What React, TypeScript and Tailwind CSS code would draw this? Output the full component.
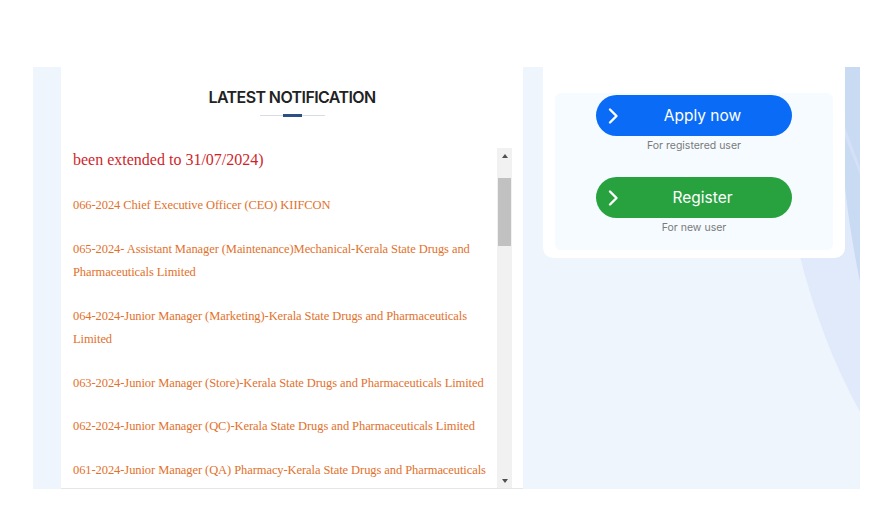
const notices = [
  '066-2024 Chief Executive Officer (CEO) KIIFCON',
  '065-2024- Assistant Manager (Maintenance)Mechanical-Kerala State Drugs and Pharmaceuticals Limited',
  '064-2024-Junior Manager (Marketing)-Kerala State Drugs and Pharmaceuticals Limited',
  '063-2024-Junior Manager (Store)-Kerala State Drugs and Pharmaceuticals Limited',
  '062-2024-Junior Manager (QC)-Kerala State Drugs and Pharmaceuticals Limited',
  '061-2024-Junior Manager (QA) Pharmacy-Kerala State Drugs and Pharmaceuticals Limited',
]

function Chevron() {
  return (
    <svg width="12" height="18" viewBox="0 0 12 18" fill="none">
      <path d="M3 2.5L9.5 9L3 15.5" stroke="white" strokeWidth="2.4" strokeLinecap="round" strokeLinejoin="round" />
    </svg>
  )
}

function ActionButton({ label, note, color }: { label: string; note: string; color: string }) {
  return (
    <div className="flex flex-col items-center">
      <button
        className={`w-[196px] h-[41px] rounded-full flex items-center pl-[11px] pr-[14px] text-white ${color}`}
      >
        <Chevron />
        <span className="flex-1 text-center text-[15.5px] pl-[8px]">{label}</span>
      </button>
      <p className="mt-[3px] text-[10.5px] text-[#7a7a7a] leading-[14px]">{note}</p>
    </div>
  )
}

export default function App() {
  return (
    <div className="w-[880px] h-[528px] bg-white pt-[67px]" style={{ fontFamily: 'Inter, "Open Sans", sans-serif' }}>
      <div className="relative ml-[33px] w-[827px] h-[422px] bg-[#eff5fd] flex overflow-hidden">
        {/* background swoosh */}
        <svg className="absolute inset-0" width="827" height="422" viewBox="0 0 827 422">
          <path d="M735 0 C 752 150, 775 250, 827 345 L 827 0 Z" fill="#e0eafa" />
          <path d="M812 0 L827 0 L827 215 C 821 185, 815 150, 812 120 Z" fill="#c9daf3" />
          <path d="M812 60 L827 100 L827 108 L812 70 Z" fill="#d3e0f5" />
        </svg>

        {/* notifications card */}
        <div className="relative ml-[28px] w-[462px] h-full bg-white flex flex-col">
          <div className="pt-[19px] flex flex-col items-center">
            <h2 className="text-[16px] font-semibold text-[#222] tracking-[-0.6px] leading-[22px]">LATEST NOTIFICATION</h2>
            <div className="relative mt-[6px] w-[65px] h-[3px]">
              <div className="absolute left-0 right-0 top-[1px] h-px bg-[#d8dde5]" />
              <div className="absolute left-[23px] w-[19px] h-[3px] bg-[#2d4f86]" />
            </div>
          </div>

          <div className="mt-[31px] flex-1 flex pr-[11px] border-b border-[#e6e6e6] min-h-0">
            <div className="flex-1 overflow-hidden pl-[12px] pr-2" style={{ fontFamily: '"Liberation Serif", "Times New Roman", serif' }}>
              <div className="-mt-[12px]">
                <p className="pt-[10px] pb-[10px] text-[16px] leading-[28px] text-[#cf1f2b]">been extended to 31/07/2024)</p>
                {notices.map((n) => (
                  <p key={n} className="py-[10px] text-[12.5px] tracking-[-0.08px] leading-[23.5px] text-[#e2712c]">{n}</p>
                ))}
              </div>
            </div>
            <div className="w-[15px] h-full bg-[#f1f1f1] flex flex-col items-center">
              <div className="h-[15px] flex items-center justify-center">
                <div className="w-0 h-0 border-l-[3px] border-r-[3px] border-b-[4px] border-l-transparent border-r-transparent border-b-[#505050]" />
              </div>
              <div className="mt-[15px] w-[13px] h-[68px] bg-[#c1c1c1]" />
              <div className="flex-1" />
              <div className="h-[15px] flex items-center justify-center">
                <div className="w-0 h-0 border-l-[3px] border-r-[3px] border-t-[4px] border-l-transparent border-r-transparent border-t-[#505050]" />
              </div>
            </div>
          </div>
        </div>

        {/* action card */}
        <div className="relative ml-[20px] w-[302px] h-[191px] bg-white rounded-b-[10px] px-[12px] pt-[26px] pb-[8px]">
          <div className="h-full bg-[#f5fbff] rounded-[6px] flex flex-col items-center pt-[2px] gap-[24px]">
            <ActionButton label="Apply now" note="For registered user" color="bg-[#0a6cf6]" />
            <ActionButton label="Register" note="For new user" color="bg-[#28a23f]" />
          </div>
        </div>
      </div>
    </div>
  )
}
